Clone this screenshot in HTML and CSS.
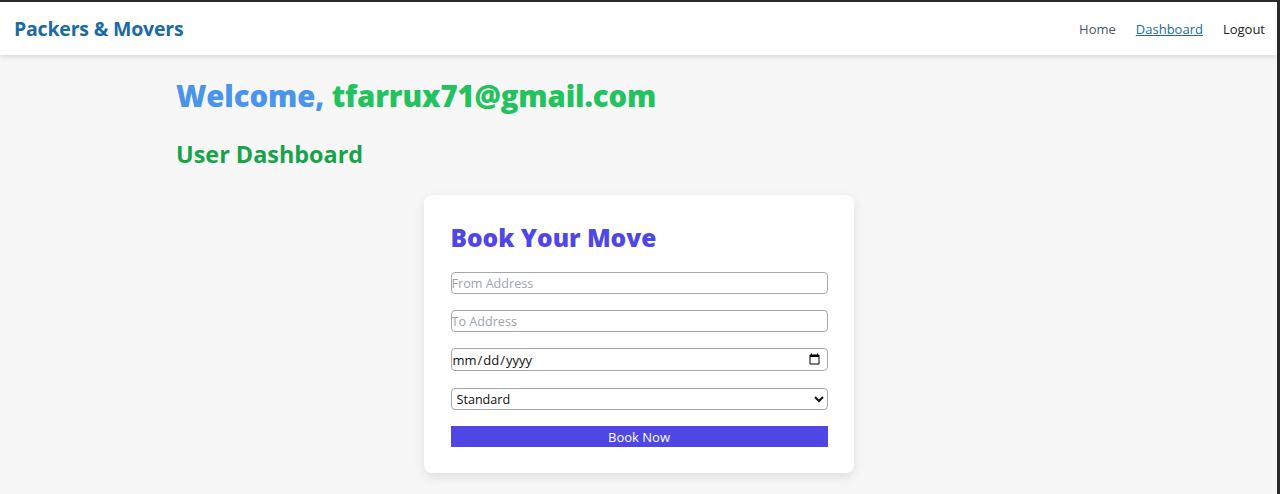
FILE: index.html
```html
<!DOCTYPE html>
<html lang="en">
<head>
<meta charset="utf-8">
<title>Packers &amp; Movers - Dashboard</title>
<link rel="stylesheet" href="styles.css">
</head>
<body>
<div class="frame">
  <header class="topbar">
    <a class="brand" href="#">Packers &amp; Movers</a>
    <nav class="nav">
      <a class="nav-link nav-home" href="#">Home</a>
      <a class="nav-link nav-active" href="#">Dashboard</a>
      <a class="nav-link nav-logout" href="#">Logout</a>
    </nav>
  </header>
  <main class="container">
    <h1 class="welcome"><span class="welcome-word">Welcome,</span> <span class="welcome-email">tfarrux71@gmail.com</span></h1>
    <h2 class="section-title">User Dashboard</h2>
    <section class="card">
      <h3 class="card-title">Book Your Move</h3>
      <form class="form">
        <input class="field" type="text" placeholder="From Address">
        <input class="field" type="text" placeholder="To Address">
        <input class="field field-date" type="date">
        <select class="field field-select">
          <option>Standard</option>
          <option>Express</option>
        </select>
        <button class="btn" type="button">Book Now</button>
      </form>
    </section>
  </main>
</div>
</body>
</html>
```

FILE: styles.css
```css
* { box-sizing: border-box; }

html, body {
  margin: 0;
  height: 100%;
}

body {
  background: #2b2b2b;
  font-family: "Open Sans", "Noto Sans", sans-serif;
  padding: 2px 3px 0 0;
  overflow: hidden;
}

.frame {
  background: #f7f7f7;
  min-height: 100%;
}

.topbar {
  height: 53px;
  background: #ffffff;
  box-shadow: 0 2px 5px rgba(0, 0, 0, 0.12);
  display: flex;
  align-items: center;
  justify-content: space-between;
  padding: 0 12px 0 14px;
}

.brand {
  color: #1a6aa3;
  font-weight: 700;
  font-size: 19.5px;
  text-decoration: none;
  letter-spacing: -0.2px;
}

.nav {
  display: flex;
  gap: 20px;
  font-size: 13px;
}

.nav-link {
  text-decoration: none;
}

.nav-home { color: #4b5563; }
.nav-active { color: #1a6aa3; text-decoration: underline; }
.nav-logout { color: #222222; }

.container {
  max-width: 925px;
  margin: 0 auto;
  padding-top: 21px;
}

.welcome {
  margin: 0;
  font-size: 29.3px;
  font-weight: 800;
  line-height: 40px;
  letter-spacing: -0.1px;
}

.welcome-word { color: #4a94ea; }
.welcome-email { color: #22c35e; }

.section-title {
  margin: 22px 0 0;
  color: #16a34a;
  font-size: 23.4px;
  font-weight: 700;
  line-height: 32px;
}

.card {
  width: 430px;
  margin: 25px auto 0;
  background: #ffffff;
  border-radius: 8px;
  box-shadow: 0 4px 12px rgba(0, 0, 0, 0.1);
  padding: 23px 26px 26px 27px;
}

.card-title {
  margin: 0 0 14px;
  color: #4f46e5;
  font-size: 24.5px;
  font-weight: 800;
  line-height: 40px;
}

.form {
  display: flex;
  flex-direction: column;
  gap: 16px;
}

.field {
  width: 100%;
  height: 22px;
  border: 1px solid #a6a6b0;
  border-radius: 4px;
  padding: 0;
  font-family: "Open Sans", "Noto Sans", sans-serif;
  font-size: 12.6px;
  color: #111111;
  background: #ffffff;
}

.field::placeholder { color: #9ca3af; }

.field-date {
  height: 23px;
  padding-right: 4px;
  font-size: 13px;
}

.field-select {
  height: 22px;
  padding-left: 1px;
  margin-top: 1px;
}

.btn {
  height: 21px;
  border: none;
  border-radius: 0;
  background: #4f46e5;
  color: #ffffff;
  font-family: "Open Sans", "Noto Sans", sans-serif;
  font-size: 13px;
  padding: 0;
}
```
